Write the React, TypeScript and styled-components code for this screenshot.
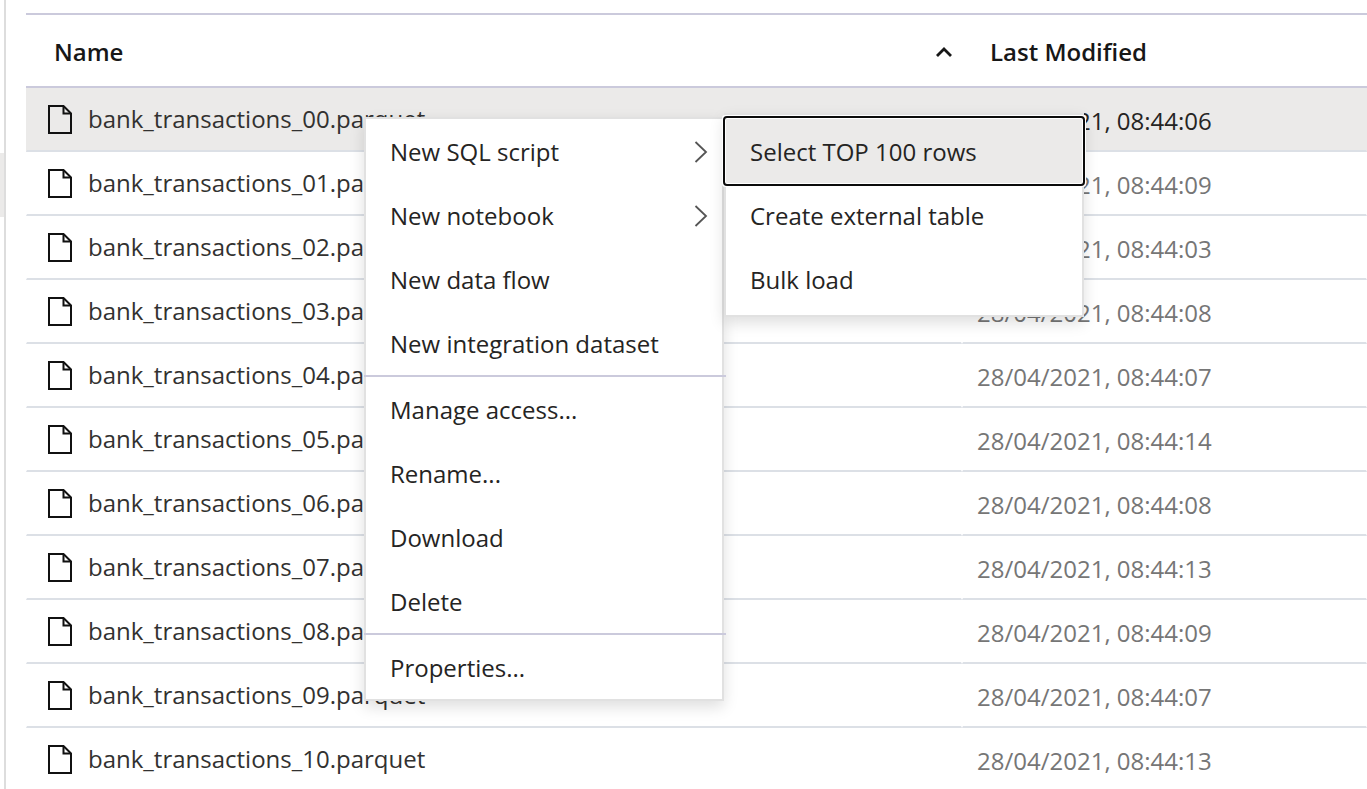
import React from "react";
import styled, { createGlobalStyle, css } from "styled-components";

const GlobalStyle = createGlobalStyle`
  *, *::before, *::after { box-sizing: border-box; }
  body {
    margin: 0;
    background: #fff;
    color: #323130;
    font-family: "Open Sans", "Noto Sans", sans-serif;
    font-size: 24px;
    line-height: 32px;
  }
`;

const Shell = styled.div`
  display: flex;
  height: 100vh;
  overflow: hidden;
`;

const NavEdge = styled.aside`
  flex: none;
  width: 6px;
  padding-top: 153px;
  border-right: 2px solid #dddddd;
`;

const NavSelection = styled.div`
  height: 64px;
  background: #ebeae9;
`;

const Main = styled.main`
  position: relative;
  flex: 1;
  min-width: 0;
  padding: 13px 0 0 20px;
`;

const FileTable = styled.table`
  width: 100%;
  table-layout: fixed;
  border-collapse: separate;
  border-spacing: 0;
`;

const NameColumn = styled.col`
  width: 936px;
`;

const HeaderCell = styled.th`
  height: 75px;
  padding: 0;
  border-top: 2px solid #cbcadc;
  border-bottom: 2px solid #cbcadc;
`;

const HeaderButton = styled.button`
  display: flex;
  align-items: center;
  justify-content: space-between;
  width: 100%;
  padding: 2px 10px 0 28px;
  border: 0;
  background: none;
  color: #171717;
  font: inherit;
  font-weight: 600;
  text-align: left;
`;

const Cell = styled.td`
  height: 64px;
  padding: 0 16px;
  border: 1px solid transparent;
  border-top: 0;
  border-bottom: 2px solid #dce0e6;
  white-space: nowrap;
`;

const NameCell = styled(Cell)`
  padding-left: 21px;
`;

const DateCell = styled(Cell)`
  padding: 4px 14px 0;
  color: #767676;
`;

const Row = styled.tr<{ $selected: boolean }>`
  ${(p) =>
    p.$selected &&
    css`
      background: #ebeae9;
      ${DateCell} {
        color: #252423;
      }
    `}
`;

const FileLabel = styled.span`
  display: flex;
  align-items: center;
  gap: 16px;
`;

const menuSurface = css`
  position: absolute;
  width: 360px;
  margin: 0;
  list-style: none;
  background: #fff;
  border: 2px solid #e1e1e1;
  box-shadow: 0 6px 14px rgba(0, 0, 0, 0.13);
`;

const ContextMenu = styled.ul`
  ${menuSurface}
  top: 117px;
  left: 358px;
  padding: 0;
`;

const Submenu = styled.ul`
  ${menuSurface}
  top: -6px;
  left: calc(100% + 2px);
  padding: 4px 0;
`;

const MenuEntry = styled.li`
  position: relative;
`;

const MenuButton = styled.button<{ $active?: boolean }>`
  display: flex;
  align-items: center;
  justify-content: space-between;
  width: 100%;
  height: 64px;
  padding: 2px 14px 0 24px;
  border: 0;
  background: none;
  color: #252423;
  font: inherit;
  text-align: left;
  ${(p) =>
    p.$active &&
    css`
      position: relative;
      background: #ebeae9;
      border-radius: 1px;
      outline: 2px solid #0b0b0b;
      outline-offset: 1px;
      box-shadow: 0 0 0 4px #fff;
    `}
`;

const Separator = styled.li`
  height: 2px;
  margin: 0 -4px 0 -2px;
  background: #cbcadc;
`;

const FileIcon = () => (
  <svg width="24" height="30" viewBox="0 0 24 30" fill="none" stroke="#111" strokeWidth="2" aria-hidden="true">
    <path d="M1 2h14.5l7.5 7.5V29H1z" />
    <path d="M15.5 2v7.5H23" />
  </svg>
);

const SortIcon = () => (
  <svg width="16" height="10" viewBox="0 0 16 10" fill="none" stroke="#171717" strokeWidth="2.8" aria-hidden="true">
    <path d="M1 9l7-7 7 7" />
  </svg>
);

const ChevronIcon = () => (
  <svg width="14" height="22" viewBox="0 0 14 22" fill="none" stroke="#555" strokeWidth="1.8" aria-hidden="true">
    <path d="M1.5 1L12 11 1.5 21" />
  </svg>
);

const times = ["06", "09", "03", "08", "07", "14", "08", "13", "09", "07", "13"];
const files = times.map((seconds, i) => ({
  name: `bank_transactions_${String(i).padStart(2, "0")}.parquet`,
  modified: `28/04/2021, 08:44:${seconds}`,
}));

const scriptActions = ["Select TOP 100 rows", "Create external table", "Bulk load"];

export default function App() {
  return (
    <>
      <GlobalStyle />
      <Shell>
        <NavEdge>
          <NavSelection />
        </NavEdge>
        <Main>
          <FileTable>
            <colgroup>
              <NameColumn />
              <col />
            </colgroup>
            <thead>
              <tr>
                <HeaderCell scope="col" aria-sort="ascending">
                  <HeaderButton type="button">
                    Name
                    <SortIcon />
                  </HeaderButton>
                </HeaderCell>
                <HeaderCell scope="col">
                  <HeaderButton type="button">Last Modified</HeaderButton>
                </HeaderCell>
              </tr>
            </thead>
            <tbody>
              {files.map((file, i) => (
                <Row key={file.name} $selected={i === 0}>
                  <NameCell>
                    <FileLabel>
                      <FileIcon />
                      {file.name}
                    </FileLabel>
                  </NameCell>
                  <DateCell>{file.modified}</DateCell>
                </Row>
              ))}
            </tbody>
          </FileTable>

          <ContextMenu role="menu">
            <MenuEntry role="none">
              <MenuButton type="button" role="menuitem" aria-haspopup="menu" aria-expanded="true">
                New SQL script
                <ChevronIcon />
              </MenuButton>
              <Submenu role="menu">
                {scriptActions.map((label, i) => (
                  <MenuEntry role="none" key={label}>
                    <MenuButton type="button" role="menuitem" $active={i === 0}>
                      {label}
                    </MenuButton>
                  </MenuEntry>
                ))}
              </Submenu>
            </MenuEntry>
            <li role="none">
              <MenuButton type="button" role="menuitem" aria-haspopup="menu">
                New notebook
                <ChevronIcon />
              </MenuButton>
            </li>
            {["New data flow", "New integration dataset"].map((label) => (
              <li role="none" key={label}>
                <MenuButton type="button" role="menuitem">{label}</MenuButton>
              </li>
            ))}
            <Separator role="separator" />
            {["Manage access...", "Rename...", "Download", "Delete"].map((label) => (
              <li role="none" key={label}>
                <MenuButton type="button" role="menuitem">{label}</MenuButton>
              </li>
            ))}
            <Separator role="separator" />
            <li role="none">
              <MenuButton type="button" role="menuitem">Properties...</MenuButton>
            </li>
          </ContextMenu>
        </Main>
      </Shell>
    </>
  );
}
